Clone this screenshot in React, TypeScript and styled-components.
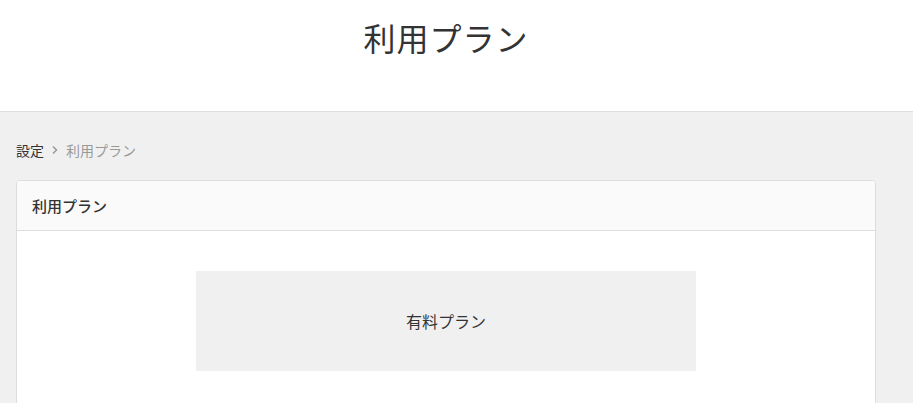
import React from "react";
import styled, { createGlobalStyle } from "styled-components";

const Global = createGlobalStyle`
  html, body { margin: 0; padding: 0; background: #f0f0f0; }
  body { font-family: "Noto Sans CJK JP", "Noto Sans", sans-serif; color: #333; }
`;

const Page = styled.div`
  max-width: 892px;
`;

const Header = styled.header`
  background: #fff;
  border-bottom: 1px solid #dddddd;
  display: flex;
  justify-content: center;
  padding-top: 13px;
  height: 98px;
  margin-right: -21px;
  padding-right: 21px;
`;

const Title = styled.h1`
  margin: 0;
  font-size: 32px;
  font-weight: 400;
  line-height: 48px;
  color: #333;
  letter-spacing: 1px;
`;

const Main = styled.main`
  padding: 28px 16px 0;
`;

const Breadcrumb = styled.nav`
  display: flex;
  align-items: center;
  gap: 7px;
  font-size: 14px;
  line-height: 20px;
  margin-bottom: 20px;
`;

const Crumb = styled.span<{ $current?: boolean }>`
  color: ${(p) => (p.$current ? "#999" : "#333")};
`;

const Card = styled.section`
  background: #fff;
  border: 1px solid #dddddd;
  border-radius: 4px;
  overflow: hidden;
`;

const CardHeader = styled.div`
  height: 49px;
  background: #fafafa;
  border-bottom: 1px solid #dddddd;
  display: flex;
  align-items: center;
  padding: 0 15px;
  font-size: 15px;
  font-weight: 500;
  color: #333;
`;

const CardBody = styled.div`
  padding: 40px 0;
  display: flex;
  justify-content: center;
`;

const PlanBox = styled.div`
  width: 500px;
  height: 100px;
  background: #f0f0f0;
  display: flex;
  align-items: center;
  justify-content: center;
  font-size: 16px;
  color: #333;
`;

const Chevron = () => (
  <svg width="8" height="10" viewBox="0 0 8 10" aria-hidden>
    <path d="M2 1.5 L5.5 5 L2 8.5" fill="none" stroke="#999" strokeWidth="1.5" />
  </svg>
);

export default function App() {
  return (
    <>
      <Global />
      <Page>
        <Header>
          <Title>利用プラン</Title>
        </Header>
        <Main>
          <Breadcrumb>
            <Crumb>設定</Crumb>
            <Chevron />
            <Crumb $current>利用プラン</Crumb>
          </Breadcrumb>
          <Card>
            <CardHeader>利用プラン</CardHeader>
            <CardBody>
              <PlanBox>有料プラン</PlanBox>
            </CardBody>
          </Card>
        </Main>
      </Page>
    </>
  );
}
